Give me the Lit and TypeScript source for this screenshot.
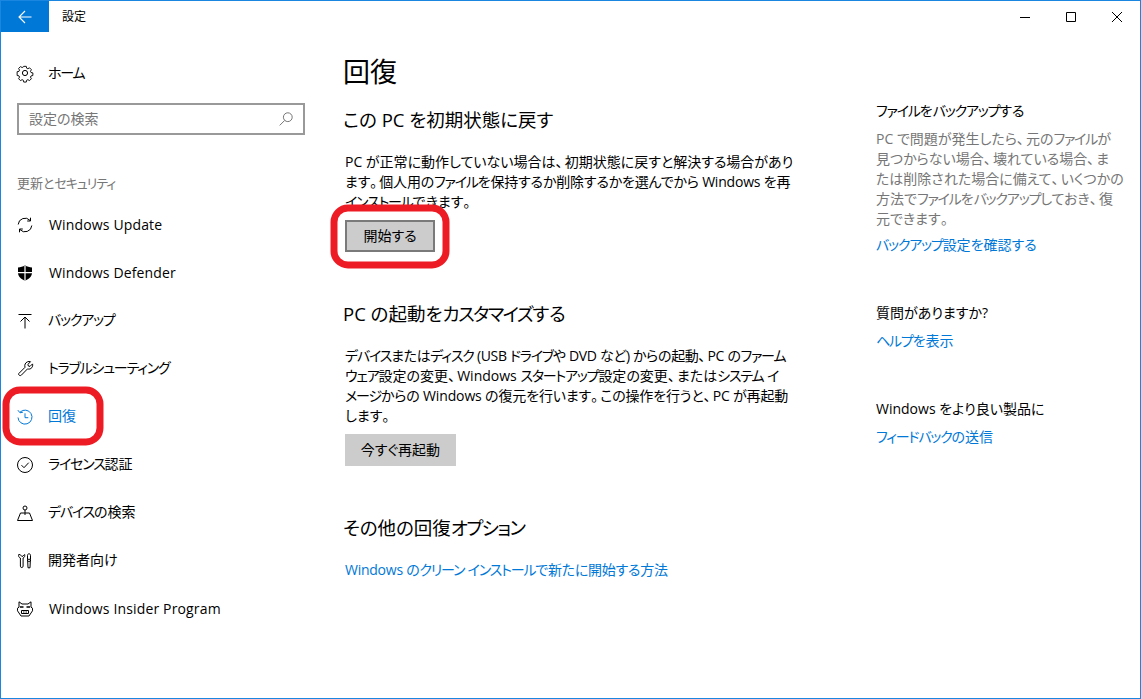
import { LitElement, html, css, svg } from "lit";
import { customElement } from "lit/decorators.js";

const icon = (body: unknown) => html`<svg class="ic" viewBox="0 0 16 16" fill="none" stroke="currentColor" stroke-width="1">${body}</svg>`;
const icons: Record<string, unknown> = {
  home: svg`<circle cx="8" cy="8" r="2.6"/><path d="M6.6.8h2.8l.4 2 1.3.6 1.8-1 2 2-1 1.8.6 1.3 2 .4v2.8l-2 .5-.6 1.2 1 1.8-2 2-1.8-1-1.3.6-.4 2H6.6l-.4-2-1.3-.6-1.8 1-2-2 1-1.8-.6-1.3-2-.4V6.600l2-.4.6-1.300-1-1.800 2-2 1.800 1 1.300-.6z" transform="translate(.6 .6) scale(.925)"/>`,
  update: svg`<path d="M1.200 7.500A6.800 6.800 0 0 1 13 3.400"/><path d="M13.500.7v3.300h-3.300"/><path d="M14.800 8.500A6.800 6.800 0 0 1 3 12.600"/><path d="M2.500 15.300V12h3.300"/>`,
  defender: svg`<path fill="currentColor" stroke="none" d="M8 .3c2 1.500 4.500 2.100 7 2.100v5.300c0 3.700-3 6.300-7 8-4-1.700-7-4.300-7-8V2.400c2.500 0 5-.6 7-2.100z"/><path stroke="#fff" stroke-width="1.200" d="M8 .5v15.300M1 7.700h14"/>`,
  backup: svg`<path d="M1.500 1.500h13M8 15.500V4M3.500 8.500 8 4l4.500 4.500"/>`,
  trouble: svg`<path d="M1.800 12.500 8 6.300c-.7-2.300.2-4.600 2.500-5.500 1-.4 2-.4 3-.1L11 3.300l.3 1.700 1.700.4 2.500-2.500c.4 1.200.2 2.700-.7 3.800-1.100 1.300-2.800 1.700-4.300 1.200l-6.200 6.300c-1.300 1.100-3.400-.4-2.500-1.700z"/>`,
  recovery: svg`<path d="M3 3.200A7 7 0 1 1 1 8.500"/><path d="M.9 1.200 3 3.800l3-.7"/><path d="M8 4.300v4.400h3.300"/>`,
  activation: svg`<circle cx="8" cy="8" r="7.500"/><path d="m4.500 8.200 2.500 2.500 4.700-5"/>`,
  find: svg`<circle cx="8" cy="3" r="2"/><path d="M8 5v5M.5 15.500 3.500 8h9l3 7.500z"/>`,
  dev: svg`<path d="M1.700 1.500C1.200 3 2 4.700 3.400 5v8.200c0 1.800 2.700 1.800 2.700 0V5c1.400-.4 2-2 1.500-3.500L6 3.200l-1.200.2-1.500-1.700z"/><path d="M12 .8c-1 0-1.500.7-1.500 1.500v4h3v-4c0-.8-.5-1.500-1.500-1.500zM10.500 6.300v2h3v-2M10.700 8.300l.3 6.500h2l.3-6.500"/>`,
  insider: svg`<path d="M2 .8 5 3h6l3-2.200v5.400l1.500 1v2.600L14 12l-2 3H4l-2-3-1.500-2.200V7.200l1.500-1z"/><path stroke-width="1.600" d="M3 6h3.500M9.500 6H13"/><path d="M4.500 9.500h7v3h-7z"/><path stroke-width="1.300" d="M6.800 10.500v1M9.200 10.500v1"/>`,
};

/* The reference font sets katakana tighter and the comma/period wider than Noto does. */
const t = (s: string) =>
  s.split(/([\u30A0-\u30FF]+|[、。])/).map((part) =>
    /^[\u30A0-\u30FF]/.test(part)
      ? html`<span class="k">${part}</span>`
      : /^[、。]/.test(part)
        ? html`<span class="p">${part}</span>`
        : part
  );
type Line = [string, string?];
const lines = (rows: Line[]) =>
  rows.map(([s, cls], i) => html`${i ? html`<br />` : ""}<span class=${cls ?? ""}>${t(s)}</span>`);

const nav: [string, string, boolean?][] = [
  ["update", "Windows Update"],
  ["defender", "Windows Defender"],
  ["backup", "バックアップ"],
  ["trouble", "トラブルシューティング"],
  ["recovery", "回復", true],
  ["activation", "ライセンス認証"],
  ["find", "デバイスの検索"],
  ["dev", "開発者向け"],
  ["insider", "Windows Insider Program"],
];

@customElement("app-root")
export class AppRoot extends LitElement {
  static styles = css`
    :host {
      display: block;
      position: relative;
      width: 1141px;
      height: 699px;
      box-sizing: border-box;
      border: 1px solid #1a86e0;
      background: #fff;
      color: #000;
      overflow: hidden;
      font: 14px/20px "Open Sans", "Noto Sans CJK JP", sans-serif;
      font-feature-settings: "palt";
    }
    * { box-sizing: border-box; }
    .k { letter-spacing: -0.085em; }
    .p { letter-spacing: 0.15em; }
    .tight1 { letter-spacing: -0.15px; }
    .tight2 { letter-spacing: -0.2px; }
    .tight3 { letter-spacing: -0.35px; }
    .title { display: flex; align-items: center; height: 31px; }
    .back { width: 48px; height: 31px; background: #0078d7; display: flex; align-items: center; justify-content: center; color: #fff; }
    .back svg { width: 14px; height: 14px; }
    .caption { margin-left: 13px; font-size: 12px; flex: 1; }
    .winbtn { width: 46px; height: 31px; display: flex; align-items: center; justify-content: center; }
    .winbtn svg { width: 10px; height: 10px; }
    .main { display: flex; }
    .side { width: 343px; flex: none; padding-top: 21px; }
    .ic { width: 16px; height: 16px; flex: none; overflow: visible; }
    .row { display: flex; align-items: center; height: 48px; padding-left: 16px; gap: 15px; }
    .row span.txt { padding-bottom: 2px; }
    .row.latin span.txt { padding-bottom: 0; margin-left: 1px; letter-spacing: 0.15px; }
    .row.home { height: 40px; margin-bottom: 10px; }
    .row.on { color: #0078d7; }
    .search { margin-left: 16px; width: 288px; height: 32px; border: 2px solid #999; display: flex; align-items: center; justify-content: space-between; padding: 0 10px; color: #767676; }
    .search svg { width: 14px; height: 14px; }
    .label { margin: 37px 0 5px 16px; height: 24px; line-height: 22px; color: #767676; font-size: 13px; }
    .content { width: 532px; flex: none; padding-top: 20px; }
    h1 { margin: 0 0 0 -1px; font-size: 27px; font-weight: 400; line-height: 40px; }
    h2 { margin: 0 0 0 -1px; font-size: 18.500px; font-weight: 400; line-height: 28px; }
    .c1 { margin-top: 14px; }
    p { margin: 18px 0 8px 1px; font-size: 14px; }
    .btn { margin-left: 1px; display: flex; align-items: center; justify-content: center; background: #ccc; height: 32px; }
    .btn.focus { width: 90px; border: 2px solid #7a7a7a; }
    .btn.plain { width: 111px; }
    .s2 { margin-top: 48px; }
    .s3 { margin-top: 48px; }
    a { color: #0078d7; text-decoration: none; display: block; }
    .s3 a { margin: 18px 0 0 1px; letter-spacing: -0.25px; }
    .right { flex: 1; padding-top: 69px; }
    .right h3 { margin: 0 0 8px; font-size: 14px; font-weight: 400; line-height: 20px; }
    .right .note { color: #767676; margin: 0 0 6px; }
    .right section { margin-bottom: 48px; }
    .mark { position: absolute; left: -1px; top: -1px; pointer-events: none; }
  `;

  render() {
    return html`
      <div class="title">
        <div class="back">
          <svg viewBox="0 0 14 14" fill="none" stroke="currentColor" stroke-width="1.100"><path d="M13.500 7H1M7 1 1 7l6 6"/></svg>
        </div>
        <div class="caption">設定</div>
        <div class="winbtn"><svg viewBox="0 0 10 10" fill="none" stroke="#000"><path d="M0 5.500h10"/></svg></div>
        <div class="winbtn"><svg viewBox="0 0 10 10" fill="none" stroke="#000"><path d="M.5.500h9v9h-9z"/></svg></div>
        <div class="winbtn"><svg viewBox="0 0 10 10" fill="none" stroke="#000"><path d="m0 0 10 10M10 0 0 10"/></svg></div>
      </div>
      <div class="main">
        <div class="side">
          <div class="row home">${icon(icons.home)}<span>${t("ホーム")}</span></div>
          <div class="search">
            <span>設定の検索</span>
            <svg viewBox="0 0 14 14" fill="none" stroke="#767676"><circle cx="8.800" cy="5.200" r="4.400"/><path d="M5.700 8.400.7 13.400"/></svg>
          </div>
          <div class="label">${t("更新とセキュリティ")}</div>
          ${nav.map(([k, s, on]) => html`<div class="row ${on ? "on" : ""} ${s.startsWith("Windows") ? "latin" : ""}">${icon(icons[k])}<span class="txt">${t(s)}</span></div>`)}
        </div>
        <div class="content">
          <h1>回復</h1>
          <section class="c1">
            <h2>この PC を初期状態に戻す</h2>
            <p>${lines([["PC が正常に動作していない場合は、初期状態に戻すと解決する場合があり"], ["ます。個人用のファイルを保持するか削除するかを選んでから Windows を再", "tight2"], ["インストールできます。"]])}</p>
            <div class="btn focus">開始する</div>
          </section>
          <section class="s2">
            <h2>${t("PC の起動をカスタマイズする")}</h2>
            <p>${lines([["デバイスまたはディスク (USB ドライブや DVD など) からの起動、PC のファーム", "tight3"], ["ウェア設定の変更、Windows スタートアップ設定の変更、またはシステム イ"], ["メージからの Windows の復元を行います。この操作を行うと、PC が再起動", "tight1"], ["します。"]])}</p>
            <div class="btn plain">今すぐ再起動</div>
          </section>
          <section class="s3">
            <h2>${t("その他の回復オプション")}</h2>
            <a>${t("Windows のクリーン インストールで新たに開始する方法")}</a>
          </section>
        </div>
        <div class="right">
          <section>
            <h3>${t("ファイルをバックアップする")}</h3>
            <p class="note">${lines([["PC で問題が発生したら、元のファイルが"], ["見つからない場合、壊れている場合、ま"], ["たは削除された場合に備えて、いくつかの"], ["方法でファイルをバックアップしておき、復"], ["元できます。"]])}</p>
            <a>${t("バックアップ設定を確認する")}</a>
          </section>
          <section>
            <h3>質問がありますか?</h3>
            <a>${t("ヘルプを表示")}</a>
          </section>
          <section>
            <h3>Windows をより良い製品に</h3>
            <a>${t("フィードバックの送信")}</a>
          </section>
        </div>
      </div>
      <svg class="mark" width="1141" height="699" fill="none" stroke="#ed1c24" stroke-width="7">
        <rect x="334" y="208" width="112" height="57" rx="14"/>
        <rect x="6" y="390" width="94" height="52" rx="14"/>
      </svg>
    `;
  }
}
